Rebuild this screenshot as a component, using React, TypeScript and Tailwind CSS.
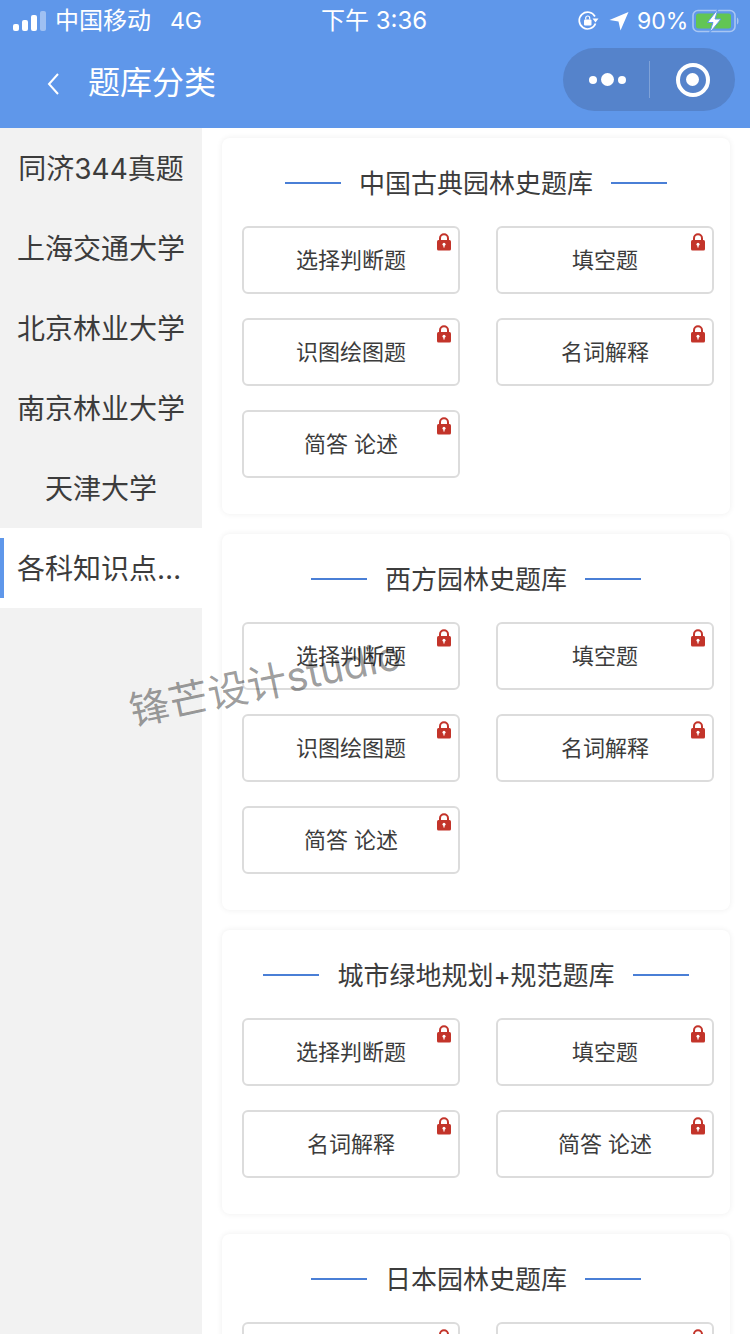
import React from 'react';

const subjects = ['同济344真题', '上海交通大学', '北京林业大学', '南京林业大学', '天津大学', '各科知识点汇总'];

const banks = [
  { title: '中国古典园林史题库', items: ['选择判断题', '填空题', '识图绘图题', '名词解释', '简答 论述'] },
  { title: '西方园林史题库', items: ['选择判断题', '填空题', '识图绘图题', '名词解释', '简答 论述'] },
  { title: '城市绿地规划+规范题库', items: ['选择判断题', '填空题', '名词解释', '简答 论述'] },
  { title: '日本园林史题库', items: ['选择判断题', '填空题'] },
];

function LockIcon() {
  return (
    <svg width="16" height="18" viewBox="0 0 16 18" className="absolute right-[6px] top-[5px]">
      <path d="M4 8V5.2a4 4 0 0 1 8 0V8" fill="none" stroke="#c3342a" strokeWidth="2" />
      <rect x="1" y="7" width="14" height="10.5" rx="1.5" fill="#c3342a" />
      <circle cx="8" cy="11.2" r="1.5" fill="#fff" />
      <rect x="7.4" y="11.5" width="1.2" height="3" fill="#fff" />
    </svg>
  );
}

function StatusBar() {
  return (
    <div className="flex h-[40px] items-center pl-[13px] pt-[2px] text-white text-[24px]">
      <div className="flex items-end gap-[3px] h-[20px] w-[33px]">
        <span className="w-[6px] h-[7px] rounded-[2px] bg-white" />
        <span className="w-[6px] h-[11px] rounded-[2px] bg-white" />
        <span className="w-[6px] h-[16px] rounded-[2px] bg-white" />
        <span className="w-[6px] h-[20px] rounded-[2px] bg-white/40" />
      </div>
      <span className="ml-[9px] w-[95px] whitespace-nowrap">中国移动</span>
      <span className="ml-[20px] w-[31px] text-[23px] whitespace-nowrap">4G</span>
      <span className="ml-[120px] w-[107px] whitespace-nowrap">下午 3:36</span>
      <svg width="22" height="22" viewBox="0 0 22 22" className="ml-[149px]" fill="none">
        <path d="M18.5 13.5A8.4 8.4 0 1 1 18 6.5" stroke="#fff" strokeWidth="1.7" />
        <path d="M15.5 8.500 L21.500 8.500 L18.500 12.500 Z" fill="#fff" />
        <rect x="7" y="9.5" width="7.5" height="6" rx="1" fill="#fff" />
        <path d="M8.7 9.5V8a2 2 0 0 1 4 0v1.5" stroke="#fff" strokeWidth="1.2" />
      </svg>
      <svg width="20" height="20" viewBox="0 0 20 20" className="ml-[10px]">
        <path d="M19.5 1 L11.5 19.5 L9.5 10.5 L0.5 9 Z" fill="#fff" />
      </svg>
      <span className="ml-[8px] w-[52px] text-[23px] whitespace-nowrap">90%</span>
      <svg width="49" height="24" viewBox="0 0 49 24" className="ml-[3px]">
        <rect x="1" y="1.5" width="42" height="21" rx="5" fill="none" stroke="#a8c6f3" strokeWidth="1.6" />
        <rect x="4" y="4.5" width="35" height="15" rx="2.5" fill="#62c554" />
        <path d="M45 8.5c2 .5 2 6.500 0 7z" fill="#a8c6f3" />
        <path d="M26 0 L15.500 13.500 H21 L17.500 24 L29 10 H23 Z" fill="#fff" stroke="#5f97ea" strokeWidth="1" />
      </svg>
    </div>
  );
}

function NavBar() {
  return (
    <div className="flex h-[88px] items-center pl-[46px] pr-[15px]">
      <svg width="14" height="24" viewBox="0 0 14 24" fill="none" className="mb-[1px]">
        <path d="M12 2 L3 12 L12 22" stroke="#fff" strokeWidth="2" />
      </svg>
      <h1 className="ml-[28px] mb-[2px] text-white text-[32px] leading-none whitespace-nowrap">题库分类</h1>
      <div className="ml-auto mb-[9px] flex h-[63px] w-[172px] items-center rounded-full bg-[#5583cb]">
        <div className="flex w-[86px] items-center justify-center gap-[4px] pl-[3px]">
          <span className="w-[8px] h-[8px] rounded-full bg-white" />
          <span className="w-[13px] h-[13px] rounded-full bg-white" />
          <span className="w-[8px] h-[8px] rounded-full bg-white" />
        </div>
        <span className="h-[37px] w-px bg-white/25" />
        <div className="flex flex-1 items-center justify-center">
          <span className="flex w-[34px] h-[34px] items-center justify-center rounded-full border-[4px] border-white">
            <span className="w-[13px] h-[13px] rounded-full bg-white" />
          </span>
        </div>
      </div>
    </div>
  );
}

function Sidebar() {
  return (
    <aside className="w-[202px] shrink-0 bg-[#f2f2f2]">
      {subjects.map((name, i) => (
        <div
          key={name}
          className={`relative flex h-[80px] items-center justify-center px-[17px] pt-[2px] text-[28px] text-[#3c3c3c] ${i === 5 ? 'bg-white' : ''}`}
        >
          {i === 5 && <span className="absolute left-0 top-[10px] h-[60px] w-[4px] bg-[#5f97ea]" />}
          <span className="block truncate">{name}</span>
        </div>
      ))}
    </aside>
  );
}

function BankCard({ title, items }: { title: string; items: string[] }) {
  return (
    <section className="rounded-[8px] bg-white pl-[20px] pr-[16px] pb-[36px] shadow-[0_0_6px_rgba(0,0,0,0.07)]">
      <div className="flex h-[88px] items-center justify-center gap-[18px] pr-[4px] pt-[2px]">
        <span className="h-[2px] w-[56px] bg-[#4a7fd6]" />
        <h2 className="mt-[2px] text-[26px] leading-none text-[#3c3c3c] whitespace-nowrap">{title}</h2>
        <span className="h-[2px] w-[56px] bg-[#4a7fd6]" />
      </div>
      <div className="grid grid-cols-[218px_218px] gap-x-[36px] gap-y-[24px]">
        {items.map((item, i) => (
          <div
            key={i}
            className="relative flex h-[68px] items-center justify-center rounded-[6px] border-2 border-[#dcdcdc] text-[22px] text-[#3c3c3c] whitespace-pre"
          >
            {item}
            <LockIcon />
          </div>
        ))}
      </div>
    </section>
  );
}

export default function App() {
  return (
    <div
      className="relative h-[1334px] w-[750px] overflow-hidden bg-white"
      style={{ fontFamily: 'Inter, "Noto Sans CJK SC", "Noto Sans", sans-serif' }}
    >
      <header className="h-[128px] bg-[#5f97ea]">
        <StatusBar />
        <NavBar />
      </header>
      <div className="flex h-[1206px]">
        <Sidebar />
        <main className="flex flex-1 flex-col gap-[20px] pl-[20px] pr-[20px] pt-[10px]">
          {banks.map(bank => (
            <BankCard key={bank.title} title={bank.title} items={bank.items} />
          ))}
        </main>
      </div>
      <div className="absolute left-[130px] top-[692px] origin-left -rotate-[12deg] text-[40px] leading-none text-black/40 whitespace-nowrap">
        锋芒设计studio
      </div>
    </div>
  );
}
